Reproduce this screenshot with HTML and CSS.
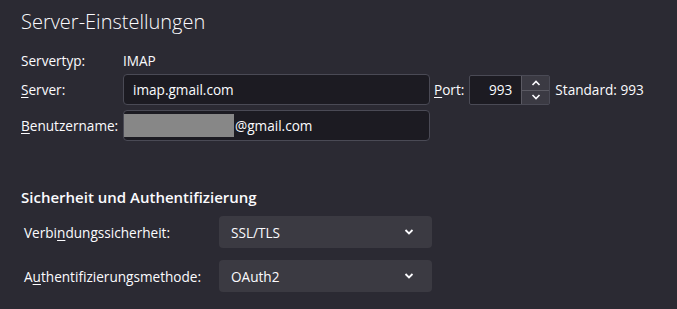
FILE: index.html
```html
<!DOCTYPE html>
<html lang="de">
<head>
    <meta charset="UTF-8">
    <title>Server-Einstellungen</title>
    <link rel="stylesheet" href="styles.css">
</head>
<body>
    <div class="settings">
        <h1 class="title">Server-Einstellungen</h1>

        <div class="server-grid">
            <div class="label">Servertyp:</div>
            <div class="value">IMAP</div>
            <div></div>

            <div class="label"><u>S</u>erver:</div>
            <div class="input">imap.gmail.com</div>
            <div class="port-group">
                <span class="label"><u>P</u>ort:</span>
                <div class="port-box">
                    <span class="port-value">993</span>
                    <div class="spinner">
                        <div class="spin-btn">
                            <svg width="10" height="6" viewBox="0 0 10 6"><path d="M1.5 5 L5 1.5 L8.5 5" fill="none" stroke="#fbfbfe" stroke-width="1.6"/></svg>
                        </div>
                        <div class="spin-btn">
                            <svg width="10" height="6" viewBox="0 0 10 6"><path d="M1.5 1 L5 4.5 L8.5 1" fill="none" stroke="#fbfbfe" stroke-width="1.6"/></svg>
                        </div>
                    </div>
                </div>
                <span class="default-port">Standard: 993</span>
            </div>

            <div class="label"><u>B</u>enutzername:</div>
            <div class="input user-input"><span class="redacted"></span>@gmail.com</div>
            <div></div>
        </div>

        <h2 class="section-title">Sicherheit und Authentifizierung</h2>

        <div class="security-grid">
            <div class="label">Verbi<u>n</u>dungssicherheit:</div>
            <div class="select">
                <span>SSL/TLS</span>
                <svg width="10" height="6" viewBox="0 0 10 6"><path d="M1.5 1 L5 4.5 L8.5 1" fill="none" stroke="#fbfbfe" stroke-width="1.8"/></svg>
            </div>

            <div class="label">A<u>u</u>thentifizierungsmethode:</div>
            <div class="select">
                <span>OAuth2</span>
                <svg width="10" height="6" viewBox="0 0 10 6"><path d="M1.5 1 L5 4.5 L8.5 1" fill="none" stroke="#fbfbfe" stroke-width="1.8"/></svg>
            </div>
        </div>
    </div>
</body>
</html>
```

FILE: styles.css
```css
body {
    margin: 0;
    background-color: #2b2a33;
    color: #fbfbfe;
    font-family: 'Open Sans', 'Noto Sans', sans-serif;
    font-size: 13.6px;
}

.settings {
    padding: 8px 0 0 21px;
}

.title {
    margin: 0;
    font-size: 20px;
    font-weight: 300;
    line-height: 28px;
}

.server-grid {
    display: grid;
    grid-template-columns: 102px 307px auto;
    grid-template-rows: 17px 31px 31px;
    row-gap: 5px;
    align-items: center;
    margin-top: 16px;
}

.label u {
    text-decoration-thickness: 1px;
    text-underline-offset: 2px;
}

.input {
    height: 29px;
    border: 1px solid #4a4a55;
    border-radius: 4px;
    background-color: #1c1b22;
    padding-left: 9px;
    display: flex;
    align-items: center;
}

.user-input {
    padding-left: 0;
}

.redacted {
    width: 110px;
    height: 23px;
    background-color: #878787;
    margin-right: 1px;
}

.port-group {
    display: flex;
    align-items: center;
    padding-left: 4px;
}

.port-box {
    display: flex;
    width: 79px;
    height: 28px;
    border: 1px solid #4a4a55;
    border-radius: 2px;
    background-color: #1c1b22;
    margin-left: 5px;
    margin-top: 1px;
}

.port-value {
    flex: 1;
    text-align: right;
    padding-right: 9px;
    line-height: 28px;
}

.spinner {
    width: 28px;
    display: flex;
    flex-direction: column;
}

.spin-btn {
    flex: 1;
    display: flex;
    justify-content: center;
    align-items: center;
    background-color: #3b3a43;
    border-left: 1px solid #5b5a63;
}

.spin-btn + .spin-btn {
    border-top: 1px solid #5b5a63;
}

.default-port {
    margin-left: 5px;
}

.section-title {
    margin: 46px 0 0;
    font-size: 15px;
    font-weight: 600;
    line-height: 20px;
}

.security-grid {
    display: grid;
    grid-template-columns: 195px 213px;
    grid-template-rows: 32px 32px;
    row-gap: 12px;
    align-items: center;
    margin-top: 9px;
    padding-left: 3px;
}

.select {
    height: 32px;
    border-radius: 4px;
    background-color: #3b3a42;
    display: flex;
    align-items: center;
    justify-content: space-between;
    padding: 0 18px 0 12px;
}
```
